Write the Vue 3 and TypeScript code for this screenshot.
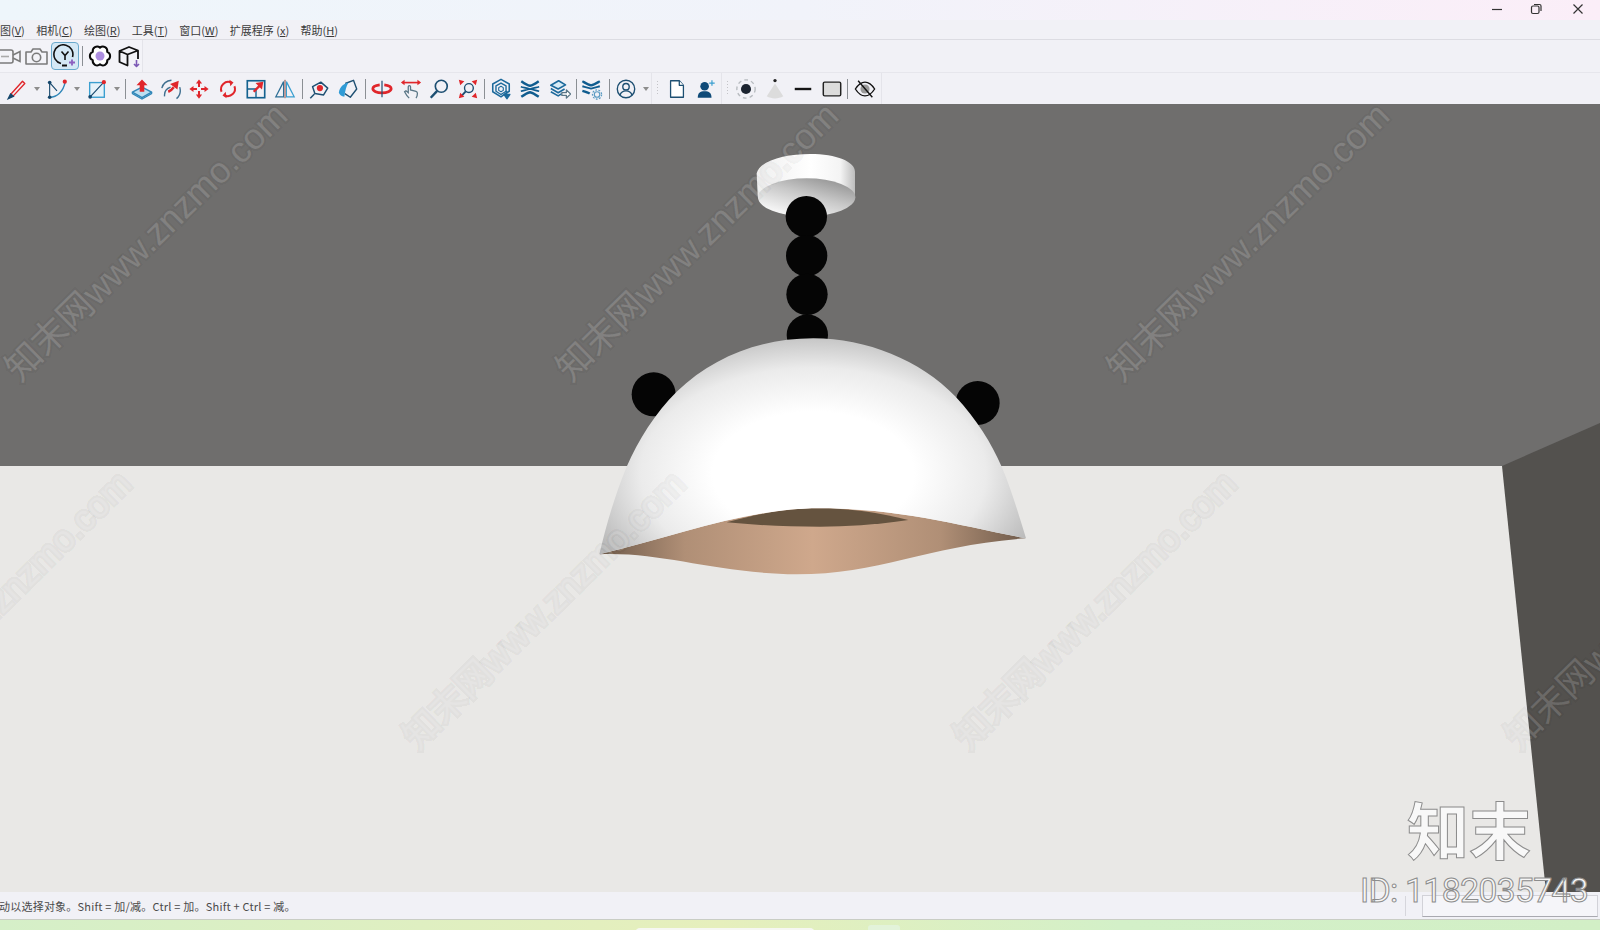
<script setup lang="ts">
interface MenuItem {
  label: string
  key: string
  spaced?: boolean
}

const menus: MenuItem[] = [
  { label: '图', key: 'V' },
  { label: '相机', key: 'C' },
  { label: '绘图', key: 'R' },
  { label: '工具', key: 'T' },
  { label: '窗口', key: 'W' },
  { label: '扩展程序', key: 'x', spaced: true },
  { label: '帮助', key: 'H' },
]

// start points of the diagonal site watermark, page coordinates
const marks = [
  [20, 383], [571, 383], [1122, 383],
  [-136, 751], [418, 751], [969, 751], [1520, 751],
]

const WATERMARK = '知末网www.znzmo.com'

// dome outline, top part only; the lower edge is shared with the inside
const DOME_EDGE = 'C1150 1160 960 1105 720 1105C500 1105 300 1185 58 1243z'
const domePath = `M58 1243C80 1150 105 1065 140 980C175 900 225 820 290 755C400 650 540 595 700 595C860 595 1020 660 1127 770C1190 838 1235 910 1265 980C1295 1050 1318 1130 1338 1195${DOME_EDGE}`
const innerPath = `M58 1243C250 1235 400 1300 650 1303C900 1303 1050 1215 1338 1195${DOME_EDGE}`
</script>

<template>
  <div class="app">
    <header class="titlebar">
      <svg class="win" width="14" height="14" viewBox="0 0 14 14"><path d="M2 7.5h10" /></svg>
      <svg class="win" width="14" height="14" viewBox="0 0 14 14"><rect x="2.5" y="4" width="7.5" height="7.5" rx="1.5" /><path d="M5 2.5h5.5a1.5 1.5 0 0 1 1.5 1.5v5" /></svg>
      <svg class="win win-close" width="14" height="14" viewBox="0 0 14 14"><path d="M2.5 2.5l9 9M11.5 2.5l-9 9" /></svg>
    </header>

    <nav class="menubar">
      <span v-for="m in menus" :key="m.key" class="menu">{{ m.label }}<template v-if="m.spaced">&nbsp;</template>(<u>{{ m.key }}</u>)</span>
    </nav>

    <div class="toolrow">
      <div class="panel panel-views">
        <svg class="v0" width="28" height="24" viewBox="0 0 28 24" fill="none" stroke="#7b7b7b" stroke-width="1.6"><rect x="2" y="6" width="16" height="13" rx="2" /><path d="M18 11l7-3.5v10L18 14" /><path d="M6 12.500h8" stroke="#aaa" /></svg>
        <svg class="v1" width="27" height="24" viewBox="0 0 27 24" fill="none" stroke="#7b7b7b" stroke-width="1.6"><path d="M3 8h5l2-3h7l2 3h5v12H3z" stroke-linejoin="round" /><circle cx="13.500" cy="13.500" r="4.200" /></svg>
        <span class="active">
          <svg width="24" height="24" viewBox="0 0 24 24" fill="none" stroke="#111" stroke-width="1.600"><path d="M8 19.500A9.500 9.500 0 1 1 19.500 13" /><path d="M8.500 7.500l3.500 4 3.500-4M12 11.500V16" /><path d="M9 21.500h5" stroke-width="2" /><path d="M19 15.500v6M16 18.500h6" stroke="#8c5fc0" stroke-width="1.800" /></svg>
        </span>
        <i class="sep" />
        <svg class="v3" width="24" height="24" viewBox="0 0 24 24" fill="#fff" stroke="#0a0a0a" stroke-width="2" stroke-linejoin="round"><path d="M12 3.700A4.400 4.400 0 0 1 19.200 7.850A4.400 4.400 0 0 1 19.200 16.150A4.400 4.400 0 0 1 12 20.300A4.400 4.400 0 0 1 4.800 16.150A4.400 4.400 0 0 1 4.800 7.850A4.400 4.400 0 0 1 12 3.700z" /><circle cx="12" cy="12" r="4.500" fill="#ad8ee0" stroke="none" /></svg>
        <svg class="v4" width="24" height="24" viewBox="0 0 24 24" fill="none" stroke="#111" stroke-width="1.800" stroke-linejoin="round"><path d="M2.500 7L12 3l9 3.500V15M2.500 7v11l8 3.500V10.500zM10.500 10.500L21 6.500" /><path d="M19.500 16v6M17 20l2.500 2.500L22 20" stroke="#7c59b5" stroke-width="1.600" /></svg>
      </div>
    </div>

    <div class="toolrow toolrow-main">
      <div class="panel panel-draw">
        <span class="btn"><svg viewBox="0 0 24 24" fill="none" stroke="#e0262b" stroke-width="1.500"><path d="M5 18L18 3.500l2.500 2.500L8 19.500z" stroke-linejoin="round" /><path d="M2.500 22.500L5 17.500l3 2.500z" fill="#14466b" stroke="#14466b" /></svg></span>
        <span class="drop" />
        <span class="btn"><svg viewBox="0 0 24 24" fill="none" stroke="#2f86b8" stroke-width="1.500"><path d="M4 5v16M4 5l8 9" stroke="#14466b" stroke-width="1.200" /><path d="M4 21c8 0 15-6 17-17" /><circle cx="4" cy="5" r="2" fill="#14466b" stroke="none" /><circle cx="4" cy="21" r="2" fill="#14466b" stroke="none" /><circle cx="20.500" cy="4" r="2.300" fill="#e0262b" stroke="none" /></svg></span>
        <span class="drop" />
        <span class="btn"><svg viewBox="0 0 24 24" fill="none" stroke="#3a9fd0" stroke-width="1.500"><rect x="4" y="5" width="16" height="16" fill="#e6f2f9" /><path d="M4.500 20.500l15-16" stroke="#14466b" stroke-width="1.200" /><circle cx="4.500" cy="20.500" r="2" fill="#14466b" stroke="none" /><circle cx="19.500" cy="4.500" r="2.300" fill="#e0262b" stroke="none" /></svg></span>
        <span class="drop" />
        <i class="sep sep-a" />
        <span class="btn"><svg viewBox="0 0 24 24"><path d="M1.500 15.500L12 10l10.500 5.500L12 21.500z" fill="#bcdff2" stroke="#2f86b8" stroke-width="1.600" stroke-linejoin="round" /><path d="M1.500 15.500v1.500L12 23l10.500-6v-1.500" fill="none" stroke="#2f86b8" stroke-width="1.300" /><path d="M12 1.500l6 6.500h-3.500v7h-5V8H6z" fill="#e0262b" /></svg></span>
        <span class="btn"><svg viewBox="0 0 24 24" fill="none" stroke-width="1.500"><path d="M2 11C3.500 5.500 8 3 12.500 2.500M21.500 10c1.500 5 0 9.500-3.500 12.500M5 20c-.5-4.500 2-8.500 6.500-10" stroke="#3f6f8f" /><path d="M9 15c2.500-1 4.500-3 6-5" stroke="#e0262b" stroke-width="2.800" /><path d="M20.500 3l-1.500 9.500L11 6.500z" fill="#e0262b" stroke="none" /></svg></span>
        <span class="btn"><svg viewBox="0 0 24 24" fill="#e0262b"><path d="M12 1.500l3.400 4.500h-2.300v3.800h-2.200V6H8.600z" /><path d="M12 1.500l3.400 4.500h-2.300v3.800h-2.200V6H8.600z" transform="rotate(90 12 12)" /><path d="M12 1.500l3.400 4.500h-2.300v3.800h-2.200V6H8.600z" transform="rotate(180 12 12)" /><path d="M12 1.500l3.400 4.500h-2.300v3.800h-2.200V6H8.600z" transform="rotate(270 12 12)" /></svg></span>
        <span class="btn"><svg viewBox="0 0 24 24" fill="none" stroke="#e0262b" stroke-width="2.200"><path d="M5 15A7.800 7.800 0 0 1 15.500 5" /><path d="M19 9A7.800 7.800 0 0 1 8.500 19" /><path d="M13.500 2l4.500 3-3.500 4z" fill="#e0262b" stroke="none" /><path d="M10.500 22L6 19l3.500-4z" fill="#e0262b" stroke="none" /></svg></span>
        <span class="btn"><svg viewBox="0 0 24 24" fill="none"><rect x="2.500" y="3" width="19" height="18.500" stroke="#14628f" stroke-width="1.800" /><path d="M2.500 12H12v9.500" stroke="#14628f" stroke-width="1.500" /><path d="M9.500 15l8-8" stroke="#e0262b" stroke-width="2.600" /><path d="M20 4l-1.500 8.500-7-7z" fill="#e0262b" /></svg></span>
        <span class="btn"><svg viewBox="0 0 24 24" fill="none" stroke-width="1.400"><path d="M10.500 4L2 20.500h8.500z" stroke="#2d6f96" /><path d="M13.500 4L22 20.500h-8.500z" stroke="#3a9fd0" /><path d="M12 2v20" stroke="#bb9a9a" stroke-width="2.200" /></svg></span>
        <i class="sep sep-b" />
        <span class="btn"><svg viewBox="0 0 24 24" fill="none" stroke="#1d4f72" stroke-width="1.600"><path d="M5 9.500L14 4.500 21.500 11 17 18.500 7.500 17z" stroke-linejoin="round" /><path d="M7 17.500L2.500 22" /><circle cx="13" cy="11" r="3.400" fill="#e0262b" stroke="none" /></svg></span>
        <span class="btn"><svg viewBox="0 0 24 24" fill="none" stroke="#1d4f72" stroke-width="1.500"><path d="M9 6l9-3.500 3.500 9.500-7 9-6-4" stroke-linejoin="round" /><path d="M2 16C3 10 7 6 12.500 5 10 9 9 14 8 20.500 5 20 3 18.500 2 16z" fill="#2f9bd6" stroke="none" /></svg></span>
        <i class="sep sep-b" />
        <span class="btn"><svg viewBox="0 0 24 24" fill="none" stroke="#e0262b" stroke-width="3"><path d="M9.500 7.500C5 8 2 9.700 2 11.800c0 2.500 4.500 4.500 10 4.500s10-2 10-4.500c0-2.100-3-3.800-7.500-4.300" /><path d="M12 3v18" stroke="#1d4f72" stroke-width="1.300" /></svg></span>
        <span class="btn"><svg viewBox="0 0 24 24" fill="none" stroke="#5a7686" stroke-width="1.400"><path d="M10 22c-2-2-4-5-5-7l1.500-1 2.500 2V9.500a1.200 1.200 0 0 1 2.500 0V13l6 1.500c1 .3 1.500 1 1.500 2 0 2-.5 4-1.500 5.500" /><path d="M3 5h18" stroke="#e0262b" stroke-width="1.800" /><path d="M1 5l4-3v6zM23 5l-4-3v6z" fill="#e0262b" stroke="none" /></svg></span>
        <span class="btn"><svg viewBox="0 0 24 24" fill="none" stroke="#1d4f72" stroke-width="1.800"><circle cx="14.500" cy="9" r="6.500" /><path d="M10 14L3 21.500" stroke-width="2.600" /></svg></span>
        <span class="btn"><svg viewBox="0 0 24 24" fill="none"><circle cx="13" cy="11" r="4.800" stroke="#1d4f72" stroke-width="1.500" /><path d="M9.500 14.500L5 19.500" stroke="#1d4f72" stroke-width="2" /><path d="M2 2l6 1.500L3.500 8zM22 2l-6 1.500L20.500 8zM2 22l1.500-6L8 20.500zM22 22l-1.500-6-4.500 4.500z" fill="#e0262b" /></svg></span>
        <i class="sep sep-c" />
        <span class="btn"><svg viewBox="0 0 24 24" fill="none" stroke="#1d6a9c" stroke-width="1.700" stroke-linejoin="round"><path d="M12 1.500l9 5v8l-5 3-4 3-9-5.500V6.500z" /><path d="M12 5.500l5.500 3v6L12 18l-5.500-3.500v-6z" stroke-width="1.500" /><path d="M12 9l2.500 1.500v3L12 15l-2.500-1.500v-3z" stroke-width="1.200" /><path d="M18 14v5M15.500 18l3 4.500 3-4.500z" fill="#1d6a9c" /></svg></span>
        <span class="btn"><svg viewBox="0 0 24 24" fill="none" stroke="#0f5c8f" stroke-width="2.600"><path d="M2.500 3.500C6 6 9 8 12 8.500c3-.5 6-2.500 9.500-5M2.500 20.500C6 18 9 16 12 15.500c3 .5 6 2.500 9.500 5" /><path d="M2 9.500C6 10.500 9 11.500 12 12c3-.5 6-1.500 10-2.500M2 14.500c4-1 7-2 10-2.500 3 .5 6 1.500 10 2.500" stroke-width="1.800" /></svg></span>
        <span class="btn stack"><svg viewBox="0 0 24 24" fill="none" stroke="#1d6a9c" stroke-width="1.800" stroke-linejoin="round"><path d="M2 8l8.500-5L18 7.500 10 12z" fill="#d7ebf6" /><path d="M2 11.500l8 4.500 7-4M2 15l8 4.500 4-2.500" /><path d="M14 16h5v-3l4.500 4.500L19 22v-3h-5z" fill="#fff" stroke="#5a7686" stroke-width="1.400" /></svg></span>
        <i class="sep sep-d" />
        <span class="btn"><svg viewBox="0 0 24 24" fill="none" stroke="#0f5c8f" stroke-width="2.600"><path d="M1.500 3.500C5 5.500 8 7.500 11 8c3-.5 6-2.500 9.500-4.500M1.500 14c3.500 1 6.500 2 8 3" /><path d="M1.500 9c3.500 1 6.500 2 9.500 2.500 3-.5 6-1.500 9.500-2.500" stroke-width="2" /><circle cx="17.500" cy="18" r="3" stroke="#5b9bc2" stroke-width="1.300" /><circle cx="17.500" cy="18" r="5" stroke="#5b9bc2" stroke-width="1.300" stroke-dasharray="2 1.500" /></svg></span>
        <i class="sep sep-e" />
        <span class="btn"><svg viewBox="0 0 24 24" fill="none" stroke="#1d4f72" stroke-width="1.500"><circle cx="12" cy="12" r="9.500" /><circle cx="12" cy="9.500" r="3.500" /><path d="M5.500 18.500c1-3 3.500-4.500 6.500-4.500s5.500 1.500 6.500 4.500" /></svg></span>
        <span class="drop" />
      </div>
      <div class="panel panel-file">
        <span class="btn"><svg viewBox="0 0 24 24" fill="#fff" stroke="#1d4f72" stroke-width="1.400" stroke-linejoin="round"><path d="M5 3h9.500L19 8v13H5z" /><path d="M14.500 3v5H19" /></svg></span>
        <span class="btn"><svg viewBox="0 0 24 24"><circle cx="10.500" cy="9" r="4.700" fill="#0f4a78" /><path d="M3 21.500c0-5 2.500-7 7.500-7s7.500 2 7.500 7z" fill="#0f4a78" /><path d="M18.500 2.500v6M15.500 5.500h6" stroke="#3a9fd0" stroke-width="1.300" /></svg></span>
      </div>
      <div class="panel panel-style">
        <span class="btn"><svg viewBox="0 0 24 24" fill="none"><circle cx="12" cy="12" r="10" stroke="#b8bcc0" stroke-width="1.500" stroke-dasharray="4 3.500" /><circle cx="12" cy="12" r="5.500" fill="#1c2430" /></svg></span>
        <span class="btn"><svg viewBox="0 0 24 24"><path d="M12 6L3 20c5 3 13 3 18 0z" fill="#dcdcdc" /><circle cx="12" cy="2.800" r="1.800" fill="#222" /></svg></span>
        <span class="btn"><svg viewBox="0 0 24 24"><path d="M3 12h18" stroke="#151515" stroke-width="2.600" /></svg></span>
        <span class="btn"><svg viewBox="0 0 24 24"><rect x="2.500" y="4.500" width="19" height="15" rx="1.500" fill="#dcdcdc" stroke="#222" stroke-width="1.600" /></svg></span>
        <i class="sep sep-f" />
        <span class="btn"><svg viewBox="0 0 24 24" fill="none" stroke="#111" stroke-width="1.500"><path d="M1.500 12C5 6.500 8.500 4.500 12 4.500S19 6.500 22.500 12C19 17.500 15.500 19.500 12 19.500S5 17.500 1.500 12z" /><circle cx="12" cy="12" r="5" fill="#9a9a9a" stroke="none" /><path d="M4.500 3L20 21" /></svg></span>
      </div>
    </div>

    <main class="viewport">
      <svg class="scene" width="1600" height="788" viewBox="0 104 1600 788">
        <defs>
          <radialGradient id="dome" gradientUnits="userSpaceOnUse" cx="0" cy="0" r="1" gradientTransform="translate(700 1000) scale(720 440)">
            <stop offset="0" stop-color="#fff" />
            <stop offset="0.42" stop-color="#fff" />
            <stop offset="0.72" stop-color="#ebebeb" />
            <stop offset="1" stop-color="#b8b8b8" />
          </radialGradient>
          <linearGradient id="peach" gradientUnits="userSpaceOnUse" x1="58" y1="0" x2="1338" y2="0">
            <stop offset="0" stop-color="#6e5a4a" />
            <stop offset="0.2" stop-color="#b08f76" />
            <stop offset="0.5" stop-color="#cfa88c" />
            <stop offset="0.8" stop-color="#b08f76" />
            <stop offset="1" stop-color="#6e5a4a" />
          </linearGradient>
          <linearGradient id="rim" x1="0" y1="0" x2="1" y2="0">
            <stop offset="0" stop-color="#efefef" />
            <stop offset="0.55" stop-color="#fff" />
            <stop offset="0.85" stop-color="#f4f4f4" />
            <stop offset="1" stop-color="#bdbdbd" />
          </linearGradient>
          <linearGradient id="under" x1="0.8" y1="0" x2="0.2" y2="0.85">
            <stop offset="0" stop-color="#929292" />
            <stop offset="0.5" stop-color="#c8c8c8" />
            <stop offset="1" stop-color="#f4f4f4" />
          </linearGradient>
        </defs>

        <rect x="0" y="104" width="1600" height="362" fill="#6f6e6d" />
        <rect x="0" y="466" width="1600" height="426" fill="#e9e8e6" />
        <path d="M1502 466L1600 423V892H1546z" fill="#53514e" />

        <g transform="translate(580 140) scale(0.33333)">
          <path d="M530 100C540 60 620 42 690 42C770 42 825 65 825 95V160C825 200 760 228 680 228C600 228 533 200 533 165z" fill="url(#rim)" />
          <ellipse cx="680" cy="172" rx="146" ry="57" fill="url(#under)" />
          <circle cx="679" cy="230" r="62" fill="#050505" />
          <circle cx="680" cy="347" r="62" fill="#050505" />
          <circle cx="681" cy="463" r="62" fill="#050505" />
          <circle cx="682" cy="585" r="62" fill="#050505" />
          <circle cx="221" cy="763" r="66" fill="#050505" />
          <circle cx="1193" cy="789" r="66" fill="#050505" />
          <path :d="innerPath" fill="url(#peach)" />
          <path d="M440 1147C540 1120 620 1105 720 1105C820 1105 900 1120 985 1140C880 1155 800 1160 720 1160C620 1160 520 1155 440 1147z" fill="#65533f" />
          <path :d="domePath" fill="url(#dome)" />
        </g>

        <text
          v-for="(p, i) in marks"
          :key="i"
          class="mark"
          :transform="`translate(${p[0]} ${p[1]}) rotate(-44.5)`"
        >{{ WATERMARK }}</text>
      </svg>
    </main>

    <footer class="statusbar">
      <span class="hint">动以选择对象。Shift = 加/减。Ctrl = 加。Shift + Ctrl = 减。</span>
      <i class="status-sep" />
      <span class="measure" />
    </footer>

    <div class="taskstrip">
      <span class="task-a" />
      <span class="task-b" />
    </div>

    <div class="brand">
      <div class="brand-name">知末</div>
      <div class="brand-id">ID: 1182035743</div>
    </div>
  </div>
</template>

<style scoped>
.app {
  position: relative;
  width: 1600px;
  height: 930px;
  display: flex;
  flex-direction: column;
  overflow: hidden;
  background: #f1f1f6;
  font-family: "Noto Sans CJK SC", "Noto Sans", sans-serif;
  color: #333;
}

.titlebar {
  height: 20px;
  flex: none;
  display: flex;
  justify-content: flex-end;
  align-items: center;
  gap: 25px;
  padding-right: 15px;
  box-sizing: border-box;
  background: linear-gradient(90deg, #eef6fb 0%, #f1f3fa 50%, #fbeef8 100%);
}

.win {
  fill: none;
  stroke: #333;
  stroke-width: 1.2;
  margin-top: -2px;
}

.win-close {
  margin-left: 3px;
}

.menubar {
  height: 20px;
  flex: none;
  display: flex;
  align-items: center;
  gap: 11.4px;
  font-size: 11px;
  box-sizing: border-box;
  border-bottom: 1px solid #dcdce2;
  background: #f1f1f6;
}

.menu {
  white-space: nowrap;
  color: #3a3a3a;
}

.menu u {
  text-underline-offset: 1px;
}

.toolrow {
  height: 32px;
  flex: none;
  display: flex;
  align-items: stretch;
  box-sizing: border-box;
}

.toolrow-main {
  border-top: 1px solid #e6e6ec;
}

.panel {
  display: flex;
  align-items: center;
  border-right: 1px solid #e4e4ea;
  box-sizing: border-box;
}

.panel-views {
  width: 143px;
  background: #f3f3f8;
}

.v0 { margin-left: -5px; flex: none; }
.v1 { flex: none; }

.active {
  width: 26px;
  height: 26px;
  margin-left: 1px;
  display: flex;
  align-items: center;
  justify-content: center;
  background: #d4e8f5;
  border: 1px solid #6aa9cc;
  border-radius: 4px;
}

.v3 { margin-left: 2.5px; flex: none; }
.v4 { margin-left: 5px; flex: none; }

.sep {
  width: 1px;
  height: 20px;
  margin: 0 2px 0 3px;
  background: #8b8f94;
  flex: none;
}

.panel-draw {
  width: 652px;
  padding-left: 3px;
}

.btn {
  width: 28.5px;
  height: 24px;
  flex: none;
  display: flex;
  justify-content: center;
}

.btn svg {
  width: 22px;
  height: 22px;
  margin-top: 1px;
}

.stack {
  margin-left: 2px;
}

.drop {
  width: 11.5px;
  flex: none;
  display: flex;
  justify-content: center;
}

.drop::after {
  content: "";
  border-left: 3.5px solid transparent;
  border-right: 3.5px solid transparent;
  border-top: 4px solid #8d8d8d;
}

.sep-a { margin: 0 2px 0 2px; }
.sep-b { margin: 0 2px 0 3px; }
.sep-c { margin: 0 2px 0 2px; }
.sep-d { margin: 0 1px 0 1px; }
.sep-e { margin: 0 2px 0 3px; }
.sep-f { margin: 0 3px 0 1px; }

.panel-file {
  width: 70px;
  padding-left: 11px;
  position: relative;
}

.panel-style {
  width: 160px;
  padding-left: 10px;
  position: relative;
}

.panel-file::before,
.panel-style::before {
  content: "";
  position: absolute;
  left: 4px;
  top: 7px;
  width: 3px;
  height: 16px;
  background-image: radial-gradient(circle, #c4c4c8 0.8px, transparent 1px);
  background-size: 3px 3px;
}

.viewport {
  flex: 1;
  min-height: 0;
  background: #e9e8e6;
}

.scene {
  display: block;
}

.mark {
  font-family: "Liberation Sans", "Noto Sans CJK SC", sans-serif;
  font-size: 36px;
  fill: rgba(255, 255, 255, 0.16);
  stroke: rgba(0, 0, 0, 0.05);
  stroke-width: 4px;
  paint-order: stroke;
}

.statusbar {
  height: 28px;
  flex: none;
  display: flex;
  align-items: center;
  font-size: 11px;
  background: #f1f1f6;
  border-bottom: 1px solid #c9cdc4;
  box-sizing: border-box;
}

.hint {
  flex: 1;
  margin-left: -1px;
  letter-spacing: 0.22px;
  color: #4a4a4a;
  white-space: nowrap;
}

.status-sep {
  width: 1px;
  height: 20px;
  background: #d6d6dc;
  margin-right: 16px;
}

.measure {
  width: 176px;
  height: 22px;
  margin-right: 2px;
  box-sizing: border-box;
  background: #f5f5f9;
  border: 1px solid #d2d2d8;
  border-bottom-color: #a9a9b0;
}

.taskstrip {
  height: 10px;
  flex: none;
  position: relative;
  background: linear-gradient(90deg, #d5efc8 0%, #e6efbc 45%, #d3f0c8 70%, #d2efc6 100%);
}

.task-a {
  position: absolute;
  left: 635px;
  top: 8px;
  width: 180px;
  height: 6px;
  border-radius: 5px 5px 0 0;
  background: #f6f7f2;
}

.task-b {
  position: absolute;
  left: 868px;
  top: 5px;
  width: 32px;
  height: 8px;
  border-radius: 3px 3px 0 0;
  background: #e3f3da;
}

.brand {
  position: absolute;
  right: 12px;
  top: 790px;
  width: 230px;
  pointer-events: none;
  display: flex;
  flex-direction: column;
  align-items: flex-start;
}

.brand-name {
  margin-left: 49px;
  font-size: 62px;
  font-weight: 700;
  line-height: 76px;
  color: #f8f8f8;
  -webkit-text-stroke: 1px #8c8c8c;
}

.brand-id {
  margin-top: 4px;
  margin-left: 2px;
  font-family: "Roboto", "Liberation Sans", sans-serif;
  font-size: 34px;
  line-height: 40px;
  letter-spacing: -0.8px;
  white-space: nowrap;
  color: #f6f6f6;
  -webkit-text-stroke: 1px #8c8c8c;
}
</style>
